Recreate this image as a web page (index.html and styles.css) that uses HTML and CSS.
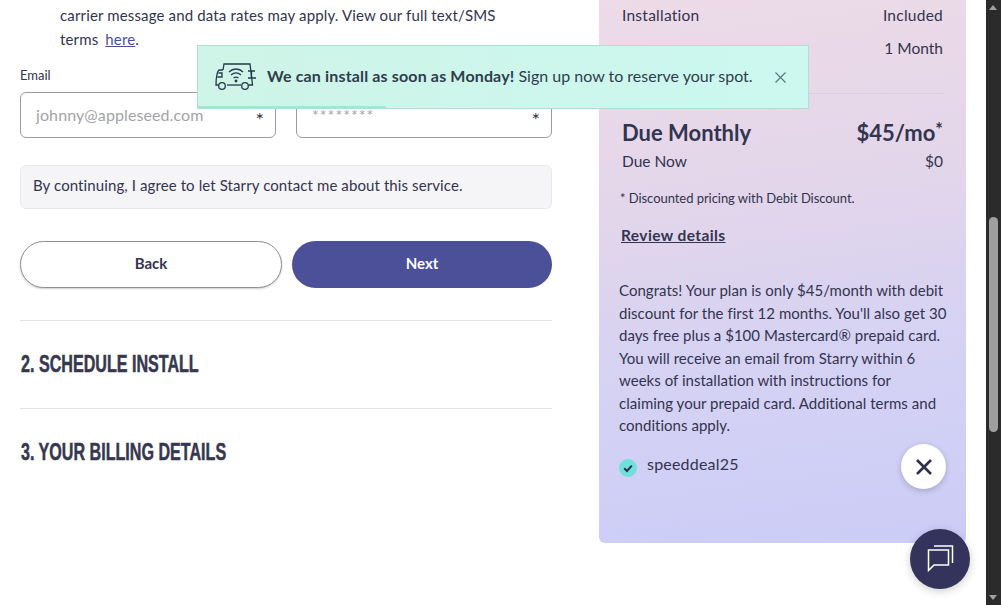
FILE: index.html
```html
<!DOCTYPE html>
<html lang="en">
  <head>
    <meta charset="UTF-8" />
    <meta name="viewport" content="width=device-width, initial-scale=1.0" />
    <title>Starry signup</title>
    <link rel="stylesheet" href="styles.css">
  </head>
  <body>
    <div class="page">
      <main class="form-col">
        <p class="consent">
          apply; by signing up you agree that standard<br />
          carrier message and data rates may apply. View our full text/SMS<br />
          terms <a href="#">here</a>.
        </p>
        <div class="fields">
          <div class="field">
            <label for="email">Email</label>
            <div class="input-box">
              <input type="text" id="email" placeholder="johnny@appleseed.com" />
              <span class="req">*</span>
            </div>
          </div>
          <div class="field">
            <label for="password">Password</label>
            <div class="input-box input-box-pw">
              <input type="text" id="password" placeholder="********" />
              <span class="req">*</span>
            </div>
          </div>
        </div>
        <div class="notice">By continuing, I agree to let Starry contact me about this service.</div>
        <div class="button-group">
          <button type="button" class="btn-back">Back</button>
          <button type="button" class="btn-next">Next</button>
        </div>
        <h2 class="step step-first"><span>2. Schedule Install</span></h2>
        <h2 class="step"><span>3. Your Billing Details</span></h2>
      </main>

      <aside class="summary-col">
        <div class="summary">
          <div class="row row-install"><span>Installation</span><span>Included</span></div>
          <div class="row row-term"><span></span><span>1 Month</span></div>
          <div class="row row-monthly"><span>Due Monthly</span><span>$45/mo<sup>*</sup></span></div>
          <div class="row row-now"><span>Due Now</span><span>$0</span></div>
          <p class="fine">* Discounted pricing with Debit Discount.</p>
          <a href="#" class="review">Review details</a>
          <p class="promo">
            Congrats! Your plan is only $45/month with debit<br />
            discount for the first 12 months. You'll also get 30<br />
            days free plus a $100 Mastercard® prepaid card.<br />
            You will receive an email from Starry within 6<br />
            weeks of installation with instructions for<br />
            claiming your prepaid card. Additional terms and<br />
            conditions apply.
          </p>
          <div class="coupon">
            <svg class="check" width="18" height="18" viewBox="0 0 18 18">
              <circle cx="9" cy="9" r="9" fill="#6fe0da" />
              <path d="M5.2 9.2 L8 12 L12.8 6.6" fill="none" stroke="#2c2f52" stroke-width="2" />
            </svg>
            <span>speeddeal25</span>
          </div>
        </div>
      </aside>

      <div class="scrollbar">
        <span class="arrow-up"></span>
        <span class="thumb"></span>
        <span class="arrow-down"></span>
      </div>
    </div>

    <div class="toast">
      <svg class="truck" width="42" height="28" viewBox="0 0 42 28" fill="none" stroke="#27384a" stroke-width="1.3">
        <path d="M8 7 L9 1 H35 L37.500 22 H33.500" />
        <path d="M26 22 H12" />
        <path d="M8 7 H4.500 C2.500 7 1 14 1 22 H3.500" />
        <path d="M3.500 10 H7 V14 H2.500" />
        <path d="M33 8 H40 M33 15 H41" />
        <path d="M36.500 8 V15" />
        <circle cx="7" cy="23" r="3.300" />
        <circle cx="30" cy="23" r="3.300" />
        <path d="M14 9 C18 5 24 5 28 9 M16 12 C19 9.500 23 9.500 26 12 M18.500 15 C20 14 22 14 23.500 15" />
        <circle cx="21" cy="18" r="0.800" fill="#27384a" />
      </svg>
      <p class="toast-text"><b>We can install as soon as Monday!</b> Sign up now to reserve your spot.</p>
      <svg class="toast-close" width="11" height="11" viewBox="0 0 11 11" stroke="#5d7a78" stroke-width="1.2">
        <path d="M0.500 0.500 L10.500 10.500 M10.500 0.500 L0.500 10.500" />
      </svg>
      <span class="toast-progress"></span>
    </div>

    <button type="button" class="float-close" aria-label="Close">
      <svg width="18" height="18" viewBox="0 0 18 18" stroke="#2c2f52" stroke-width="2.600">
        <path d="M2 2 L16 16 M16 2 L2 16" />
      </svg>
    </button>

    <button type="button" class="chat" aria-label="Chat">
      <svg width="28" height="28" viewBox="0 0 28 28" fill="none" stroke="#fff" stroke-width="1.500">
        <path d="M8 1 H26.500 V18" />
        <path d="M2.500 5 H22.500 V20 H8 L2.500 25.500 Z" />
      </svg>
    </button>
  </body>
</html>
```

FILE: styles.css
```css
* {
  box-sizing: border-box;
}
html,
body {
  height: 100%;
  margin: 0;
  overflow: hidden;
}
body {
  font-family: Lato, "Noto Sans", sans-serif;
  font-size: 15px;
  color: #33344f;
  background-color: white;
}
.page {
  display: flex;
  height: 605px;
}

/* left column */
.form-col {
  width: 532px;
  margin-left: 20px;
  flex: none;
}
.consent {
  margin: -21px 0 0;
  padding-left: 40px;
  line-height: 24px;
  letter-spacing: 0.15px;
  white-space: nowrap;
  height: 74px;
}
.consent a {
  margin-left: 3px;
  color: #4b5098;
}
.fields {
  display: flex;
  gap: 20px;
  margin-top: 14px;
}
.field {
  flex: 1;
}
.field label {
  display: block;
  font-size: 13px;
  line-height: 16px;
  margin-bottom: 9px;
}
.input-box {
  display: flex;
  align-items: center;
  height: 46px;
  padding: 0 11px 0 15px;
  border: 1px solid #9a9a9f;
  border-radius: 6px;
}
.input-box input {
  flex: 1;
  min-width: 0;
  border: none;
  outline: none;
  padding: 0;
  font-family: inherit;
  font-size: 16px;
  letter-spacing: 0.1px;
  background: none;
  margin-bottom: 2px;
}
.input-box input::placeholder {
  color: #a3a3a8;
  opacity: 1;
}
.input-box-pw input {
  align-self: flex-start;
  margin-top: 12px;
  letter-spacing: 1px;
}
.req {
  font-size: 20px;
  line-height: 30px;
  margin-top: 8px;
  color: #33344f;
}
.notice {
  margin-top: 27px;
  height: 44px;
  padding: 0 12px;
  line-height: 39px;
  letter-spacing: 0.1px;
  background-color: #f5f5f7;
  border: 1px solid #e9e9ec;
  border-radius: 6px;
}
.button-group {
  display: flex;
  gap: 10px;
  margin-top: 32px;
}
.button-group button {
  flex: 1 1 0;
  height: 47px;
  padding: 0 0 3px;
  border-radius: 24px;
  font-family: inherit;
  font-size: 15px;
  font-weight: 700;
  cursor: pointer;
}
.btn-back {
  background-color: white;
  color: #33344f;
  border: 1px solid #8f8f94;
  box-shadow: 0 1px 2px rgba(0, 0, 0, 0.2);
}
.btn-next {
  background-color: #4b5098;
  color: white;
  border: none;
}
.step {
  margin: 0;
  height: 88px;
  padding-left: 1px;
  line-height: 87px;
  font-family: "Liberation Sans", sans-serif;
  font-size: 23px;
  font-weight: 700;
  text-transform: uppercase;
  color: #36384f;
  border-top: 1px solid #e3e3e6;
}
/* no condensed face installed, so squeeze it */
.step span {
  display: inline-block;
  transform: scaleX(0.7);
  transform-origin: left center;
  white-space: nowrap;
  -webkit-text-stroke: 0.5px #36384f;
}
.step-first {
  margin-top: 32px;
}

/* right column */
.summary-col {
  width: 367px;
  margin-left: 47px;
  flex: none;
}
.summary {
  height: 543px;
  padding: 0 23px 0 20px;
  border-radius: 0 0 6px 6px;
  background: linear-gradient(172deg, #eddbe7 0%, #e3d6ea 35%, #d5d2f3 65%, #ccccf7 100%);
}
.row {
  display: flex;
  justify-content: space-between;
  padding-left: 3px;
}
.row-install {
  padding-top: 5px;
  line-height: 20px;
  font-size: 15.5px;
  letter-spacing: 0.25px;
}
.row-term {
  margin-top: 13px;
  line-height: 20px;
  font-size: 15.5px;
  padding-bottom: 35px;
  border-bottom: 1px solid #dccde0;
}
.row-monthly {
  margin-top: 24px;
  font-size: 22px;
  font-weight: 700;
  line-height: 30px;
}
.row-monthly sup {
  line-height: 0;
  font-size: 18px;
  vertical-align: 5px;
}
.row-now {
  margin-top: 3px;
  line-height: 20px;
  font-size: 15.5px;
}
.fine {
  margin: 19px 0 0;
  font-size: 13px;
  letter-spacing: -0.05px;
  line-height: 16px;
  padding-left: 1px;
}
.review {
  display: block;
  margin-top: 19px;
  padding-left: 2px;
  font-size: 15.5px;
  letter-spacing: 0.4px;
  font-weight: 700;
  line-height: 20px;
  color: #33344f;
}
.promo {
  margin: 34px 0 0;
  line-height: 22.5px;
  letter-spacing: 0.03px;
  white-space: nowrap;
}
.coupon {
  display: flex;
  align-items: center;
  gap: 10px;
  margin-top: 14px;
  font-size: 16px;
  letter-spacing: 0.2px;
}
.check {
  margin-top: 8px;
}

/* fake window scrollbar */
.scrollbar {
  position: absolute;
  top: 0;
  right: 0;
  width: 15px;
  height: 605px;
  background-color: #2b2b2b;
}
.thumb {
  position: absolute;
  top: 217px;
  left: 3px;
  width: 9px;
  height: 215px;
  border-radius: 5px;
  background-color: #9f9f9f;
}
.arrow-up,
.arrow-down {
  position: absolute;
  left: 3px;
  border-left: 4.500px solid transparent;
  border-right: 4.500px solid transparent;
}
.arrow-up {
  top: 5px;
  border-bottom: 5px solid #9f9f9f;
}
.arrow-down {
  bottom: 5px;
  border-top: 5px solid #9f9f9f;
}

/* overlays */
.toast {
  position: absolute;
  top: 45px;
  left: 197px;
  width: 612px;
  height: 64px;
  display: flex;
  align-items: center;
  padding-left: 17px;
  background: linear-gradient(90deg, #cff4e8, #ccf8ef);
  border: 1px solid #aedfd0;
}
.truck {
  flex: none;
  margin-top: -1px;
}
.toast-text {
  margin: 0 0 3px 10px;
  width: 494px;
  font-size: 16px;
  color: #2f3d4c;
  white-space: nowrap;
}
.toast-text b {
  letter-spacing: 0.15px;
}
.toast-close {
  margin-left: 14px;
}
.toast-progress {
  position: absolute;
  left: -1px;
  bottom: -1px;
  width: 189px;
  height: 3px;
  background-color: #a9e3d1;
}
.float-close {
  position: absolute;
  top: 444px;
  left: 901px;
  width: 45px;
  height: 45px;
  display: flex;
  align-items: center;
  justify-content: center;
  padding: 0;
  border: none;
  border-radius: 50%;
  background-color: white;
  box-shadow: 0 2px 6px rgba(0, 0, 0, 0.2);
}
.chat {
  position: absolute;
  top: 529px;
  left: 910px;
  width: 60px;
  height: 60px;
  display: flex;
  align-items: center;
  justify-content: center;
  padding: 0;
  border: none;
  border-radius: 50%;
  background-color: #33335c;
  box-shadow: 0 2px 8px rgba(0, 0, 0, 0.2);
}
```
